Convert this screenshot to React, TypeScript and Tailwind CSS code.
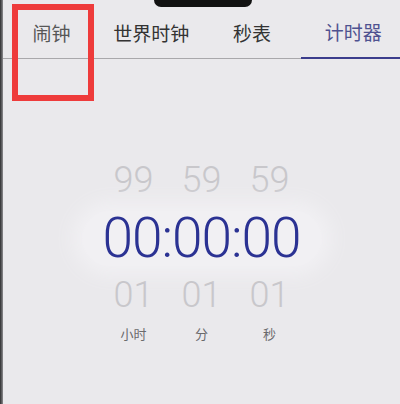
import React from 'react';

const tabs = [
  { label: '闹钟', active: false, tone: 'text-[#575757]', shift: 'pr-[2px]' },
  { label: '世界时钟', active: false, tone: 'text-[#333333]', shift: 'pr-[1px]' },
  { label: '秒表', active: false, tone: 'text-[#333333]', shift: 'pl-[2px]' },
  { label: '计时器', active: true, tone: 'text-[#4f5290]', shift: 'pl-[6px]' },
];

const columns = [
  { prev: '99', next: '01', unit: '小时' },
  { prev: '59', next: '01', unit: '分' },
  { prev: '59', next: '01', unit: '秒' },
];

const numFont = "font-['Roboto','Liberation_Sans',sans-serif]";
const cjkFont = "font-['Noto_Sans_CJK_SC','Noto_Sans',sans-serif]";

export default function App() {
  return (
    <div className="relative w-[400px] h-[404px] overflow-hidden flex bg-[#eae9ec]">
      {/* phone edge */}
      <div className="w-[3px] shrink-0 bg-gradient-to-r from-[#2e2e30] to-[#8d8d90]" />

      <div className="flex-1 flex flex-col">
        {/* tab bar */}
        <div className="grid grid-cols-4 h-[59px] border-b border-[#a9a8ab]">
          {tabs.map((t) => (
            <div
              key={t.label}
              className={`flex items-center justify-center pt-[8px] ${t.shift} ${cjkFont} text-[19px] ${t.tone} ${
                t.active ? 'border-b-2 border-[#3b3d8c] -mb-[1px]' : ''
              }`}
            >
              {t.label}
            </div>
          ))}
        </div>

        {/* picker */}
        <div className="flex flex-col items-center pt-[103px]">
          <div className="flex gap-[8px]">
            {columns.map((c, i) => (
              <div
                key={i}
                className={`w-[60px] text-center ${numFont} font-light text-[36px] leading-[36px] text-[#c8c7cb]`}
              >
                {c.prev}
              </div>
            ))}
          </div>

          <div className="flex justify-center mt-[13px] w-[240px] rounded-full bg-[#f1f0f3] shadow-[0_0_18px_10px_#f1f0f3]">
            <div
              className={`${numFont} font-light text-[55px] leading-[55px] tracking-[-1px] text-[#2b3293]`}
            >
              00:00:00
            </div>
          </div>

          <div className="flex gap-[8px] mt-[11px]">
            {columns.map((c, i) => (
              <div
                key={i}
                className={`w-[60px] text-center ${numFont} font-light text-[36px] leading-[36px] text-[#c8c7cb]`}
              >
                {c.next}
              </div>
            ))}
          </div>

          <div className="flex gap-[8px] mt-[13px]">
            {columns.map((c, i) => (
              <div
                key={i}
                className={`w-[60px] text-center ${cjkFont} text-[13px] leading-[16px] text-[#6a6a6c]`}
              >
                {c.unit}
              </div>
            ))}
          </div>
        </div>
      </div>

      {/* camera notch */}
      <div className="absolute top-0 left-[154px] w-[98px] h-[7px] bg-[#121212] rounded-b-[12px]" />

      {/* annotation box */}
      <div className="absolute left-[12px] top-[4px] w-[82px] h-[97px] border-[6px] border-[#ee3b3b]" />
    </div>
  );
}
